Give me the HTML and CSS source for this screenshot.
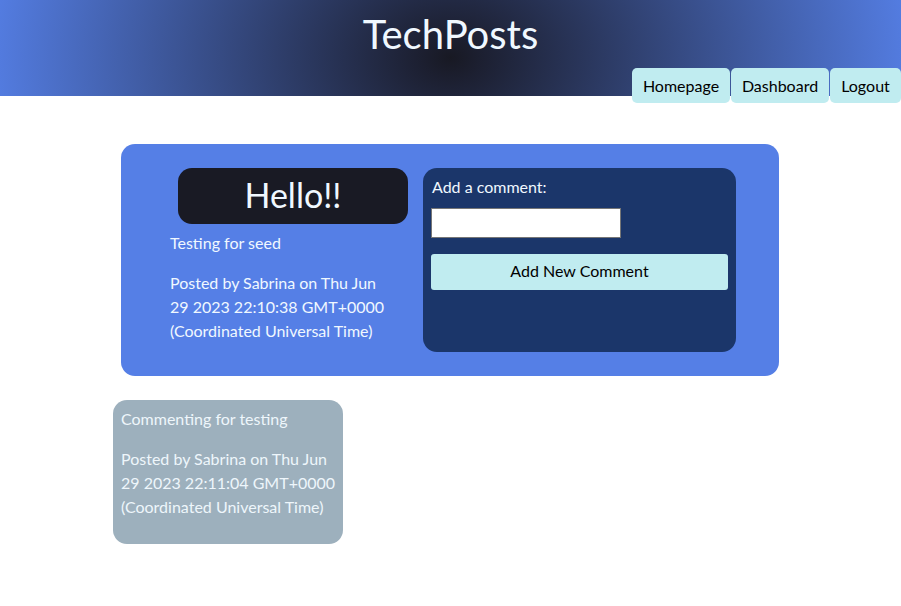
FILE: index.html
```html
<!DOCTYPE html>
<html lang="en">
<head>
<meta charset="utf-8">
<title>TechPosts</title>
<link rel="stylesheet" href="styles.css">
</head>
<body>
<header class="site-header">
  <h1 class="site-title">TechPosts</h1>
  <nav class="site-nav">
    <a class="nav-btn nav-home" href="#">Homepage</a>
    <a class="nav-btn nav-dash" href="#">Dashboard</a>
    <a class="nav-btn nav-logout" href="#">Logout</a>
  </nav>
</header>
<main class="content">
  <section class="post-card">
    <div class="post-info">
      <h2 class="post-title">Hello!!</h2>
      <div class="post-text">
        <p class="post-body">Testing for seed</p>
        <p class="post-meta">Posted by Sabrina on Thu Jun 29 2023 22:10:38 GMT+0000 (Coordinated Universal Time)</p>
      </div>
    </div>
    <form class="comment-form">
      <label class="comment-label" for="comment">Add a comment:</label>
      <input class="comment-input" id="comment" type="text">
      <button class="comment-btn" type="button">Add New Comment</button>
    </form>
  </section>
  <section class="comment-card">
    <p class="comment-body">Commenting for testing</p>
    <p class="comment-meta">Posted by Sabrina on Thu Jun 29 2023 22:11:04 GMT+0000 (Coordinated Universal Time)</p>
  </section>
</main>
</body>
</html>
```
FILE: styles.css
```css
* { box-sizing: border-box; }
body {
  margin: 0;
  font-family: "Lato", "Open Sans", sans-serif;
  font-size: 16px;
  background: #ffffff;
}
.site-header {
  height: 96px;
  display: flex;
  flex-direction: column;
  background: radial-gradient(ellipse 470px 360px at 50% 60%, #181923 0%, #1c1f30 6%, #557fe6 100%);
}
.site-title {
  margin: 0;
  height: 68px;
  line-height: 68px;
  font-size: 40px;
  font-weight: normal;
  text-align: center;
  color: #f0f8ff;
}
.site-nav {
  align-self: flex-end;
  display: flex;
  gap: 1px;
  margin-bottom: -7px;
}
.nav-btn {
  height: 35px;
  padding-bottom: 1px;
  display: flex;
  align-items: center;
  justify-content: center;
  background: #c0ecf0;
  color: #000;
  text-decoration: none;
  border-radius: 5px;
}
.nav-home, .nav-dash { width: 98px; }
.nav-logout { width: 71px; }
.content {
  padding-top: 48px;
}
.post-card {
  width: 658px;
  margin-left: 121px;
  background: #557fe6;
  border-radius: 14px;
  padding: 24px 43px 24px 49px;
  display: flex;
  gap: 15px;
  color: #f0f8ff;
}
.post-info {
  width: 238px;
}
.post-title {
  margin: 0 0 0 8px;
  width: 230px;
  height: 56px;
  line-height: 54px;
  background: #191a24;
  border-radius: 14px;
  font-size: 34px;
  font-weight: normal;
  text-align: center;
  color: #f0f8ff;
}
.post-text {
  width: 220px;
}
.post-text p, .comment-card p {
  margin: 16px 0 0;
  line-height: 24px;
}
.post-text .post-body { margin-top: 7px; }
.comment-form {
  width: 313px;
  height: 184px;
  background: #1b366a;
  border-radius: 14px;
  padding: 8px;
  display: flex;
  flex-direction: column;
  align-items: flex-start;
}
.comment-label {
  line-height: 22px;
  padding-left: 1px;
  color: #f0f8ff;
}
.comment-input {
  margin-top: 10px;
  width: 190px;
  height: 30px;
  border: 1px solid #767676;
  background: #fff;
  padding: 2px 4px;
}
.comment-btn {
  margin-top: 16px;
  width: 297px;
  height: 36px;
  border: none;
  border-radius: 3px;
  background: #c0ecf0;
  color: #000;
  font-family: inherit;
  font-size: 16px;
  padding: 0 0 3px;
}
.comment-card {
  display: flow-root;
  margin: 24px 0 0 113px;
  width: 230px;
  height: 144px;
  padding: 0 0 0 8px;
  background: #9db0bd;
  border-radius: 14px;
  color: #eef6fb;
}
.comment-card .comment-body { margin-top: 7px; }
```
